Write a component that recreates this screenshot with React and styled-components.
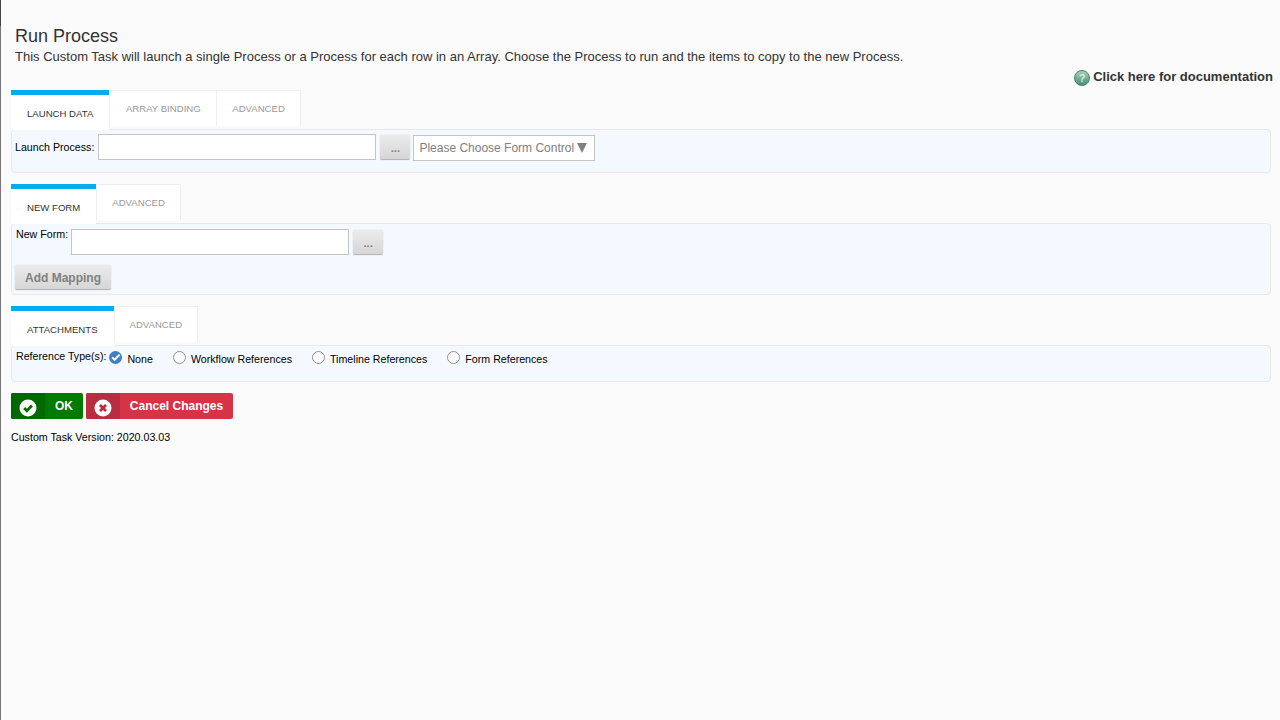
import React from 'react'
import styled, { createGlobalStyle } from 'styled-components'

const GlobalStyle = createGlobalStyle`
	html, body {
		margin: 0;
		height: 100%;
		background: #fafafa;
		font-family: "Liberation Sans", Arial, sans-serif;
	}
`

const Page = styled.div`
	height: 720px;
	box-sizing: border-box;
	border-left: 1px solid #777;
	border-image: linear-gradient(#444 27px, #777 27px) 1;
	padding: 26px 9px 0 10px;
	overflow: hidden;
`
const Title = styled.h1`
	margin: 0 0 0 4px;
	font-size: 18px;
	line-height: 20px;
	font-weight: normal;
	color: #333;
`
const Intro = styled.p`
	margin: 3px 0 0 4px;
	font-size: 13px;
	line-height: 16px;
	color: #333;
`
const DocRow = styled.div`
	display: flex;
	justify-content: flex-end;
	align-items: center;
	gap: 3px;
	height: 20px;
	margin: 1px -2px 0 0;
	font-size: 13px;
	font-weight: bold;
	color: #333;
`
const Section = styled.section`
	margin-top: ${({ $top }) => $top}px;
`
const Tabs = styled.div`
	display: flex;
	align-items: flex-start;
	height: 39px;
`
const Tab = styled.div`
	box-sizing: border-box;
	min-width: ${({ $min }) => $min || 0}px;
	font-size: 9.6px;
	text-transform: uppercase;
	text-align: center;
	white-space: nowrap;
	background: #fff;
	${({ $active }) => $active ? `
		height: 40px;
		margin-right: 1px;
		padding: 10px 16px 0;
		border-top: 5px solid #00aeef;
		color: #333;
		line-height: 18px;
		position: relative;
		z-index: 1;
	` : `
		height: 36px;
		margin-left: -1px;
		padding: 10px 15px 0;
		border: 1px solid #eeeeee;
		border-bottom: none;
		color: #999;
		line-height: 15px;
	`}
`
const Panel = styled.div`
	box-sizing: border-box;
	height: ${({ $height }) => $height}px;
	padding: ${({ $pad }) => $pad};
	background: #f4f9ff;
	border: 1px solid #e8e8e8;
	border-radius: 4px;
`
const Row = styled.div`
	display: flex;
	align-items: flex-start;
`
const Label = styled.span`
	font-size: 10.67px;
	line-height: 14px;
	color: #000;
	white-space: nowrap;
	margin: ${({ $top }) => $top}px ${({ $right }) => $right}px 0 ${({ $left }) => $left || 0}px;
`
const TextBox = styled.div`
	box-sizing: border-box;
	width: 278px;
	height: 26px;
	background: #fff;
	border: 1px solid #c4c4c4;
`
const GrayButton = styled.button`
	box-sizing: border-box;
	padding: 0;
	font-family: inherit;
	font-weight: bold;
	color: #808080;
	border: none;
	border-bottom: 1px solid #b5b5b5;
	border-radius: 2px;
	background: linear-gradient(#ebebeb, #d6d6d6);
	box-shadow: 0 0 1px #aaa;
`
const DotsButton = styled(GrayButton)`
	width: 30px;
	height: 25px;
	margin: 1px 3px 0 4px;
	padding-top: 2px;
	font-size: 11px;
`
const AddButton = styled(GrayButton)`
	display: block;
	width: 96px;
	height: 25px;
	margin-top: 10px;
	padding-top: 1px;
	font-size: 12px;
`
const Select = styled.div`
	box-sizing: border-box;
	display: flex;
	align-items: center;
	justify-content: space-between;
	width: 182px;
	height: 26px;
	margin-top: 1px;
	padding: 0 7px 0 5px;
	background: #fff;
	border: 1px solid #c4c4c4;
	font-size: 12px;
	color: #808080;
`
const Caret = styled.span`
	width: 0;
	height: 0;
	border-left: 5.5px solid transparent;
	border-right: 5.5px solid transparent;
	border-top: 10px solid #808080;
`
const RadioGroup = styled.div`
	display: flex;
	align-items: flex-start;
`
const RadioItem = styled.label`
	display: flex;
	align-items: flex-start;
	gap: 5px;
	margin-left: ${({ $left }) => $left}px;
	font-size: 10.67px;
	line-height: 14px;
	color: #000;
`
const Radio = styled.span`
	box-sizing: border-box;
	width: 13px;
	height: 13px;
	margin-top: -1px;
	border-radius: 50%;
	background: #fff;
	border: 1px solid #8f8f8f;
`
const RadioChecked = styled.svg`
	width: 13px;
	height: 13px;
	margin-top: -1px;
`
const Actions = styled.div`
	display: flex;
	gap: 3px;
	margin-top: 11px;
`
const ActionButton = styled.button`
	display: flex;
	align-items: stretch;
	height: 26px;
	padding: 0;
	border: none;
	border-radius: 2px;
	overflow: hidden;
	font-family: inherit;
	font-size: 12px;
	font-weight: bold;
	color: #fff;
	background: ${({ $bg }) => $bg};
	width: ${({ $w }) => $w}px;
`
const ActionIcon = styled.span`
	display: flex;
	align-items: center;
	justify-content: center;
	width: ${({ $w }) => $w}px;
	padding-top: 4px;
	background: ${({ $bg }) => $bg};
	flex: none;
`
const ActionText = styled.span`
	flex: 1;
	line-height: 26px;
	text-align: center;
	white-space: nowrap;
`
const Version = styled.div`
	margin-top: 11px;
	font-size: 10.67px;
	line-height: 14px;
	color: #000;
`

const HelpIcon = () => (
	<svg width="16" height="16" viewBox="0 0 16 16" style={{ marginTop: 3 }}>
		<defs>
			<linearGradient id="help" x1="0" y1="0" x2="0" y2="1">
				<stop offset="0" stopColor="#a9d4bd" />
				<stop offset="1" stopColor="#3f8f78" />
			</linearGradient>
		</defs>
		<circle cx="8" cy="8" r="7.5" fill="url(#help)" stroke="#4b8273" />
		<text x="8" y="12" textAnchor="middle" fontSize="11" fontWeight="bold" fill="#dfe8e2" fontFamily="Liberation Sans">?</text>
	</svg>
)

const CheckIcon = () => (
	<svg width="18" height="18" viewBox="0 0 18 18">
		<circle cx="9" cy="9" r="8.5" fill="#fff" />
		<path d="M5.2 9l2.7 2.7 5-5.2" fill="none" stroke="#006f00" strokeWidth="2.8" />
	</svg>
)

const CrossIcon = () => (
	<svg width="18" height="18" viewBox="0 0 18 18">
		<circle cx="9" cy="9" r="8.5" fill="#fff" />
		<path d="M6 6l6 6M12 6l-6 6" fill="none" stroke="#c5273c" strokeWidth="2.8" />
	</svg>
)

const App = () => (
	<Page>
		<GlobalStyle />
		<Title>Run Process</Title>
		<Intro>This Custom Task will launch a single Process or a Process for each row in an Array. Choose the Process to run and the items to copy to the new Process.</Intro>
		<DocRow><HelpIcon />Click here for documentation</DocRow>

		<Section $top={4}>
			<Tabs>
				<Tab $active>Launch Data</Tab>
				<Tab $min={108}>Array Binding</Tab>
				<Tab>Advanced</Tab>
			</Tabs>
			<Panel $height={44} $pad="4px 3px">
				<Row>
					<Label $top={6} $right={4}>Launch Process:</Label>
					<TextBox />
					<DotsButton>...</DotsButton>
					<Select>Please Choose Form Control<Caret /></Select>
				</Row>
			</Panel>
		</Section>

		<Section $top={11}>
			<Tabs>
				<Tab $active>New Form</Tab>
				<Tab>Advanced</Tab>
			</Tabs>
			<Panel $height={72} $pad="5px 3px">
				<Row>
					<Label $top={-2} $right={3} $left={1}>New Form:</Label>
					<TextBox />
					<DotsButton>...</DotsButton>
				</Row>
				<AddButton>Add Mapping</AddButton>
			</Panel>
		</Section>

		<Section $top={11}>
			<Tabs>
				<Tab $active>Attachments</Tab>
				<Tab>Advanced</Tab>
			</Tabs>
			<Panel $height={37} $pad="6px 4px">
				<RadioGroup>
					<Label $top={-3} $right={3}>Reference Type(s):</Label>
					<RadioItem $left={0}>
						<RadioChecked viewBox="0 0 13 13">
							<circle cx="6.5" cy="6.5" r="6.5" fill="#3f7fc4" />
							<path d="M3.2 6.4l2.4 2.4 5-5.2" fill="none" stroke="#fff" strokeWidth="2" />
						</RadioChecked>
						None
					</RadioItem>
					<RadioItem $left={20}><Radio />Workflow References</RadioItem>
					<RadioItem $left={20}><Radio />Timeline References</RadioItem>
					<RadioItem $left={20}><Radio />Form References</RadioItem>
				</RadioGroup>
			</Panel>
		</Section>

		<Actions>
			<ActionButton $bg="#007a00" $w={72}>
				<ActionIcon $bg="#006800" $w={34}><CheckIcon /></ActionIcon>
				<ActionText>OK</ActionText>
			</ActionButton>
			<ActionButton $bg="#d63347" $w={147}>
				<ActionIcon $bg="#b82d40" $w={34}><CrossIcon /></ActionIcon>
				<ActionText>Cancel Changes</ActionText>
			</ActionButton>
		</Actions>
		<Version>Custom Task Version: 2020.03.03</Version>
	</Page>
)

export default App
